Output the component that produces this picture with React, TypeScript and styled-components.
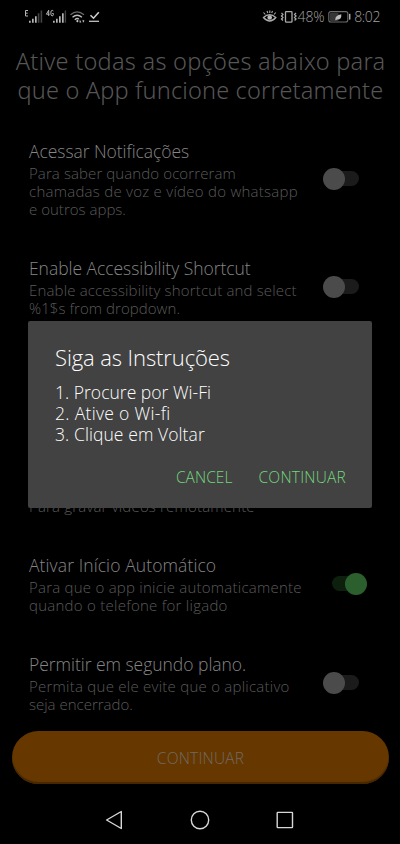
import React from 'react';
import styled, { createGlobalStyle } from 'styled-components';

const GlobalStyle = createGlobalStyle`
  * { box-sizing: border-box; }
  body { margin: 0; background: #000; font-family: "Open Sans", "Noto Sans", sans-serif; font-weight: 300; }
  button { font: inherit; border: 0; background: none; padding: 0; }
`;

const Screen = styled.div`
  position: relative;
  display: flex;
  flex-direction: column;
  width: 400px;
  height: 844px;
  overflow: hidden;
  background: #000;
`;

const StatusBar = styled.header`
  display: flex;
  justify-content: space-between;
  align-items: flex-start;
  height: 47px;
  padding: 5px 20px 0 20px;
`;

const StatusGroup = styled.div`
  display: flex;
  align-items: center;
  height: 24px;
`;

const StatusText = styled.span<{ $space: number }>`
  margin: 0 0 0 3px;
  font-size: 14px;
  line-height: 24px;
  letter-spacing: ${(p) => p.$space}px;
  color: #a2a2a2;

  &:first-of-type { margin: 0 3px 0 0; }
`;

const Line = styled.span<{ $space: number }>`
  display: block;
  white-space: nowrap;
  letter-spacing: ${(p) => p.$space}px;
`;

const Heading = styled.h1`
  margin: 0;
  height: 92px;
  padding-left: 1px;
  font-family: "Noto Sans", sans-serif;
  font-size: 23.5px;
  font-weight: 300;
  line-height: 29px;
  text-align: center;
  color: #565656;
`;

const Settings = styled.main`
  display: flex;
  flex-direction: column;
  gap: 38px;
  height: 592px;
  padding: 0 32px 0 29px;
`;

const Row = styled.section`
  display: flex;
  align-items: center;
  justify-content: space-between;
`;

const RowTitle = styled.h2`
  margin: 0 0 2px;
  padding-top: 1px;
  font-size: 17.5px;
  font-weight: 300;
  line-height: 22px;
  color: #858585;
`;

const RowText = styled.div`
  font-size: 15px;
  line-height: 18px;
  min-height: 18px;
  color: #5a5a5a;
`;

const CoveredRow = styled.div`
  height: 79px;
`;

const Track = styled.span<{ $on: boolean }>`
  display: flex;
  align-items: center;
  justify-content: ${(p) => (p.$on ? 'flex-end' : 'flex-start')};
  width: ${(p) => (p.$on ? 34 : 27)}px;
  height: 15px;
  margin-right: ${(p) => (p.$on ? 2 : 9)}px;
  border-radius: 8px;
  background: ${(p) => (p.$on ? '#0d200e' : '#1b1b1b')};
`;

const Knob = styled.span<{ $on: boolean }>`
  flex: none;
  width: 22px;
  height: 22px;
  margin: ${(p) => (p.$on ? '0 -1px 0 0' : '0 0 0 -9px')};
  border-radius: 50%;
  background: ${(p) => (p.$on ? '#2b602e' : '#4b4b4b')};
`;

const Footer = styled.div`
  padding: 0 11px 0 12px;
`;

const MainButton = styled.button`
  display: block;
  width: 100%;
  height: 53px;
  border-radius: 27px;
  background: #663800;
  box-shadow: inset 0 -2px 1px #462700;
  font-size: 15.5px;
  line-height: 55px;
  letter-spacing: 0.2px;
  color: #706a63;
`;

const NavBar = styled.nav`
  display: flex;
  justify-content: center;
  gap: 61px;
  margin-top: 24px;
`;

const Dialog = styled.div`
  position: absolute;
  left: 28px;
  top: 321px;
  width: 344px;
  height: 187px;
  padding: 23px 26px 0 27px;
  border-radius: 2px;
  background: #424242;
  color: #fff;
`;

const DialogTitle = styled.h3`
  margin: 0 0 12px;
  font-size: 22px;
  font-weight: 300;
  line-height: 26px;
`;

const Steps = styled.div`
  font-size: 17.5px;
  line-height: 21px;
  font-weight: 300;
`;

const Actions = styled.div`
  display: flex;
  justify-content: flex-end;
  gap: 26px;
  margin-top: 21px;
`;

const Action = styled.button<{ $space: number }>`
  font-size: 15.5px;
  line-height: 22px;
  letter-spacing: ${(p) => p.$space}px;
  color: #73d67e;
`;

type TextLine = [string, number];

function Setting({ title, lines, on = false }: { title?: TextLine; lines: TextLine[]; on?: boolean }) {
  return (
    <Row>
      <div>
        <RowTitle>{title ? <Line $space={title[1]}>{title[0]}</Line> : <Line $space={0}>&nbsp;</Line>}</RowTitle>
        <RowText>
          {lines.map(([text, space]) => (
            <Line key={text} $space={space}>{text}</Line>
          ))}
        </RowText>
      </div>
      {title && <Track $on={on}><Knob $on={on} /></Track>}
    </Row>
  );
}

function ConnectionIcons() {
  return (
    <svg width="85" height="24" viewBox="20 5 85 24" fill="none">
      <g stroke="#b4b4b4" strokeWidth="1">
        <path d="M28 10.5h-2.5v5.5h2.5M25.5 13.2h2.2" />
        <path d="M48.7 16v-5.8l-2.3 4h3.2M53.3 11.2q-.4-.9-1.2-.9-1.3 0-1.3 2.8t1.3 2.8q1.3 0 1.3-1.4v-1h-1.2" />
      </g>
      <g fill="#b4b4b4">
        <path d="M29 20.7h1.7v2h-1.7zM32 18.7h1.7v4h-1.7zM35 16.2h1.7v6.5h-1.7z" />
        <path d="M53 20.7h1.7v2h-1.7zM56 18.7h1.7v4h-1.7zM59 16.2h1.7v6.5h-1.7zM62 13.2h1.7v9.5h-1.7z" />
      </g>
      <path d="M37.8 13.2h1.6v9.5h-1.6zM40.6 10.5h1.6v12.2h-1.6zM64.7 10.5h1.4v12.2h-1.4z" fill="#434343" />
      <path d="M70.5 14.7q6.5-5.8 13.5 0" stroke="#6b6b6b" strokeWidth="1.3" />
      <path d="M72.5 17.3q4.7-4 9.4 0M74.8 19.7q2.4-2 4 -.6" stroke="#bdbdbd" strokeWidth="1.4" />
      <path d="M76 21l1.5-1.2L78.7 21l-1.3 1.5zM79.8 19.5l1.5 3h-1.8zM82.5 19.8l2 1-1.5 2z" fill="#c8c8c8" />
      <path d="M90.5 15.2l3 3 5.3-6" stroke="#cecece" strokeWidth="1.6" />
      <path d="M89 21.3h10" stroke="#c2c2c2" strokeWidth="1.3" />
    </svg>
  );
}

function EyeAndVibrateIcons() {
  return (
    <svg width="37" height="24" viewBox="260.5 5 37 24" fill="none" stroke="#aaa">
      <path d="M263 17.5q6-5.3 12.3 0-6 7-12.3 0z" strokeWidth="1.4" />
      <path d="M263 12.5l1.8 2M266.5 11l.8 2M269.3 10.5v2.5M272 11l-.8 2M275.3 12.5l-1.8 2" strokeWidth="1.1" />
      <circle cx="269.2" cy="17.5" r="2.3" fill="#bbb" stroke="none" />
      <rect x="285" y="11.6" width="6.5" height="10.6" rx=".8" strokeWidth="1.3" />
      <path d="M281 13l1.4 1.5-1.4 1.5 1.4 1.5-1.4 1.5 1.4 1.5M295.5 13l-1.4 1.5 1.4 1.5-1.4 1.5 1.4 1.5-1.4 1.5" strokeWidth="1.3" />
    </svg>
  );
}

function BatteryIcon() {
  return (
    <svg width="24" height="24" viewBox="327 5 24 24" fill="none">
      <rect x="328.8" y="11.6" width="19" height="10.4" rx="2" stroke="#6d6d6d" strokeWidth="1.1" />
      <rect x="330" y="12.7" width="8.5" height="8.2" rx="1" fill="#363636" />
      <path d="M349.7 13.8v5.8" stroke="#aaa" strokeWidth="1.5" />
      <path d="M335.3 19.8q-.3-4.5 6-5.6.4 5.8-4.3 5.3l-1.2 1z" fill="#bdbdbd" />
    </svg>
  );
}

export default function App() {
  return (
    <>
      <GlobalStyle />
      <Screen>
        <StatusBar>
          <StatusGroup><ConnectionIcons /></StatusGroup>
          <StatusGroup>
            <EyeAndVibrateIcons />
            <StatusText $space={-0.2}>48%</StatusText>
            <BatteryIcon />
            <StatusText $space={-0.4}>8:02</StatusText>
          </StatusGroup>
        </StatusBar>
        <Heading>
          <Line $space={0.28}>Ative todas as opções abaixo para</Line>
          <Line $space={0.18}>que o App funcione corretamente</Line>
        </Heading>
        <Settings>
          <Setting
            title={['Acessar Notificações', -0.05]}
            lines={[['Para saber quando ocorreram', 0.1], ['chamadas de voz e vídeo do whatsapp', 0.26], ['e outros apps.', 0.02]]}
          />
          <Setting
            title={['Enable Accessibility Shortcut', -0.04]}
            lines={[['Enable accessibility shortcut and select', 0.16], ['%1$s from dropdown.', 0.06]]}
          />
          <CoveredRow />
          <Setting lines={[['Para gravar vídeos remotamente', 0.18]]} />
          <Setting
            on
            title={['Ativar Início Automático', 0.1]}
            lines={[['Para que o app inicie automaticamente', 0.24], ['quando o telefone for ligado', 0.26]]}
          />
          <Setting
            title={['Permitir em segundo plano.', -0.03]}
            lines={[['Permita que ele evite que o aplicativo', 0.25], ['seja encerrado.', 0]]}
          />
        </Settings>
        <Footer><MainButton>CONTINUAR</MainButton></Footer>
        <NavBar>
          <svg width="24" height="24" viewBox="0 0 24 24" fill="none" stroke="#d8d8d8" strokeWidth="1.4" strokeLinejoin="round"><path d="M18.3 3.5v17L3.6 12z" /></svg>
          <svg width="24" height="24" viewBox="0 0 24 24" fill="none" stroke="#d8d8d8" strokeWidth="1.4"><circle cx="12" cy="12" r="8.7" /></svg>
          <svg width="24" height="24" viewBox="0 0 24 24" fill="none" stroke="#d8d8d8" strokeWidth="1.4"><rect x="4.2" y="4.4" width="15.3" height="15.2" rx=".5" /></svg>
        </NavBar>
        <Dialog role="dialog">
          <DialogTitle><Line $space={-0.1}>Siga as Instruções</Line></DialogTitle>
          <Steps>
            <Line $space={0.02}>1. Procure por Wi-Fi</Line>
            <Line $space={0.32}>2. Ative o Wi-fi</Line>
            <Line $space={0.08}>3. Clique em Voltar</Line>
          </Steps>
          <Actions>
            <Action $space={0.05}>CANCEL</Action>
            <Action $space={0.22}>CONTINUAR</Action>
          </Actions>
        </Dialog>
      </Screen>
    </>
  );
}
